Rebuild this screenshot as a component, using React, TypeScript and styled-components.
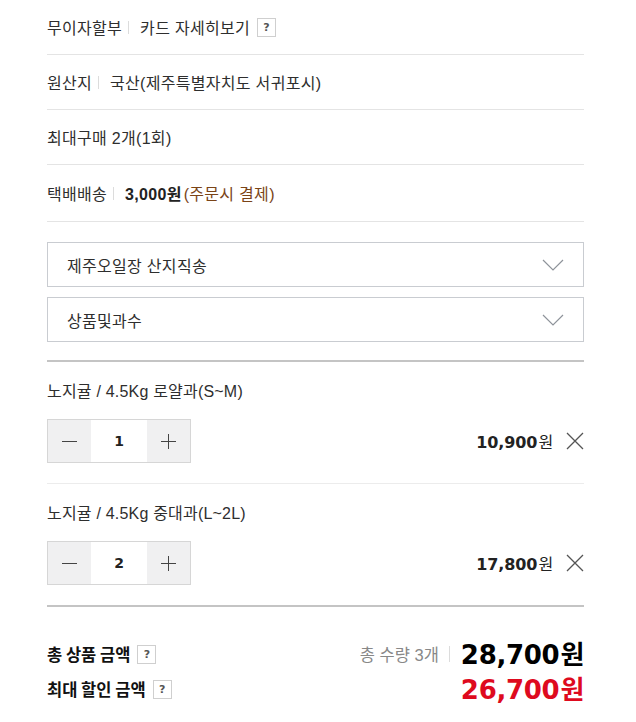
import styled, { createGlobalStyle } from "styled-components";

const GlobalStyle = createGlobalStyle`
  html, body { margin: 0; padding: 0; background: #fff; }
  body {
    font-family: "Liberation Sans", "Noto Sans CJK KR", sans-serif;
    color: #333;
    -webkit-font-smoothing: antialiased;
  }
`;

const Wrap = styled.div`
  width: 537px;
  padding: 0 47px;
`;

const InfoRow = styled.div<{ $h?: number }>`
  display: flex;
  align-items: center;
  height: ${(p) => p.$h ?? 54}px;
  border-bottom: 1px solid #e4e4e4;
  font-size: 16px;
  letter-spacing: 0.3px;
  color: #2e2e2e;
`;

const Label = styled.span`
  display: flex;
  align-items: center;
  &::after {
    content: "";
    display: inline-block;
    width: 1px;
    height: 13px;
    background: #dcdcdc;
    margin: 0 11px 0 6px;
  }
`;

const Help = styled.span`
  display: inline-flex;
  align-items: center;
  justify-content: center;
  width: 17px;
  height: 17px;
  border: 1px solid #cfcfcf;
  font-size: 11px;
  font-weight: bold;
  letter-spacing: 0;
  color: #555;
  margin-left: 7px;
  font-family: "DejaVu Sans", sans-serif;
`;

const Strong = styled.b`
  font-weight: 700;
  color: #222;
`;

const Brown = styled.span`
  color: #7a4417;
  margin-left: 2px;
`;

const Selects = styled.div`
  display: flex;
  flex-direction: column;
  gap: 10px;
  padding: 20px 0 18px;
  border-bottom: 2px solid #c4c4c4;
`;

const Select = styled.div`
  display: flex;
  align-items: center;
  justify-content: space-between;
  height: 43px;
  border: 1px solid #c9ccd1;
  padding: 0 19px 0 19px;
  font-size: 16px;
  letter-spacing: 0.3px;
  color: #2e2e2e;
`;

const Item = styled.div<{ $last?: boolean }>`
  padding: 20px 0 20px;
  border-bottom: ${(p) => (p.$last ? "2px solid #c4c4c4" : "1px solid #ececec")};
`;

const ItemName = styled.div`
  font-size: 16px;
  line-height: 20px;
  letter-spacing: 0.2px;
  color: #2e2e2e;
  margin-bottom: 17px;
`;

const ItemRow = styled.div`
  display: flex;
  align-items: center;
  justify-content: space-between;
`;

const Stepper = styled.div`
  display: flex;
  height: 42px;
  border: 1px solid #d6d6d6;
`;

const StepBtn = styled.button`
  width: 43px;
  border: 0;
  padding: 0;
  background: #f0f0f1;
  display: flex;
  align-items: center;
  justify-content: center;
`;

const Qty = styled.div`
  width: 56px;
  display: flex;
  align-items: center;
  justify-content: center;
  font-family: "DejaVu Sans", sans-serif;
  font-weight: 700;
  font-size: 14px;
  color: #222;
`;

const PriceBox = styled.div`
  display: flex;
  align-items: center;
  gap: 13px;
`;

const Price = styled.span`
  font-family: "DejaVu Sans", sans-serif;
  font-weight: 700;
  font-size: 16px;
  color: #222;
  letter-spacing: -0.1px;
`;

const Won = styled.span<{ $size?: number }>`
  font-family: "Noto Sans CJK KR", sans-serif;
  font-size: ${(p) => p.$size ?? 16}px;
  font-weight: ${(p) => (p.$size ? 700 : 400)};
  margin-left: 1px;
`;

const Totals = styled.div`
  display: grid;
  grid-template-columns: 1fr auto;
  row-gap: 5px;
  padding-top: 32px;
  align-items: center;
`;

const TotalLabel = styled.div`
  display: flex;
  align-items: center;
  font-family: "Noto Sans CJK KR", sans-serif;
  font-weight: 700;
  font-size: 16.5px;
  color: #111;
  height: 30px;
`;

const TotalRight = styled.div`
  display: flex;
  align-items: center;
  justify-content: flex-end;
  height: 30px;
`;

const Count = styled.span`
  font-size: 16.5px;
  color: #888;
  display: flex;
  align-items: center;
  &::after {
    content: "";
    display: inline-block;
    width: 1px;
    height: 16px;
    background: #dcdcdc;
    margin: 0 11px 0 10px;
  }
`;

const Big = styled.span<{ $red?: boolean }>`
  font-family: "DejaVu Sans", sans-serif;
  font-weight: 700;
  font-size: 26px;
  line-height: 30px;
  letter-spacing: -0.3px;
  color: ${(p) => (p.$red ? "#de0a1e" : "#000")};
  display: flex;
  align-items: baseline;
`;

const Chevron = () => (
  <svg width="22" height="12" viewBox="0 0 22 12">
    <path d="M1 1 L11 11 L21 1" fill="none" stroke="#8e939a" strokeWidth="1.2" />
  </svg>
);

const Minus = () => (
  <svg width="15" height="15" viewBox="0 0 15 15">
    <path d="M0 7.5 H15" stroke="#444" strokeWidth="1" />
  </svg>
);

const Plus = () => (
  <svg width="15" height="15" viewBox="0 0 15 15">
    <path d="M0 7.5 H15 M7.5 0 V15" stroke="#444" strokeWidth="1" />
  </svg>
);

const Close = () => (
  <svg width="18" height="18" viewBox="0 0 18 18">
    <path d="M1 1 L17 17 M17 1 L1 17" stroke="#555" strokeWidth="1.3" />
  </svg>
);

const items = [
  { name: "노지귤 / 4.5Kg 로얄과(S~M)", qty: 1, price: "10,900" },
  { name: "노지귤 / 4.5Kg 중대과(L~2L)", qty: 2, price: "17,800" },
];

export default function App() {
  return (
    <Wrap>
      <GlobalStyle />
      <InfoRow>
        <Label>무이자할부</Label>
        카드 자세히보기
        <Help>?</Help>
      </InfoRow>
      <InfoRow>
        <Label>원산지</Label>
        국산(제주특별자치도 서귀포시)
      </InfoRow>
      <InfoRow>최대구매 2개(1회)</InfoRow>
      <InfoRow $h={56}>
        <Label>택배배송</Label>
        <Strong>3,000원</Strong>
        <Brown>(주문시 결제)</Brown>
      </InfoRow>

      <Selects>
        <Select>
          제주오일장 산지직송
          <Chevron />
        </Select>
        <Select>
          상품및과수
          <Chevron />
        </Select>
      </Selects>

      {items.map((it, i) => (
        <Item key={it.name} $last={i === items.length - 1}>
          <ItemName>{it.name}</ItemName>
          <ItemRow>
            <Stepper>
              <StepBtn>
                <Minus />
              </StepBtn>
              <Qty>{it.qty}</Qty>
              <StepBtn>
                <Plus />
              </StepBtn>
            </Stepper>
            <PriceBox>
              <Price>
                {it.price}
                <Won>원</Won>
              </Price>
              <Close />
            </PriceBox>
          </ItemRow>
        </Item>
      ))}

      <Totals>
        <TotalLabel>
          총 상품 금액 <Help>?</Help>
        </TotalLabel>
        <TotalRight>
          <Count>총 수량 3개</Count>
          <Big>
            28,700<Won $size={26}>원</Won>
          </Big>
        </TotalRight>
        <TotalLabel>
          최대 할인 금액 <Help>?</Help>
        </TotalLabel>
        <TotalRight>
          <Big $red>
            26,700<Won $size={26}>원</Won>
          </Big>
        </TotalRight>
      </Totals>
    </Wrap>
  );
}
